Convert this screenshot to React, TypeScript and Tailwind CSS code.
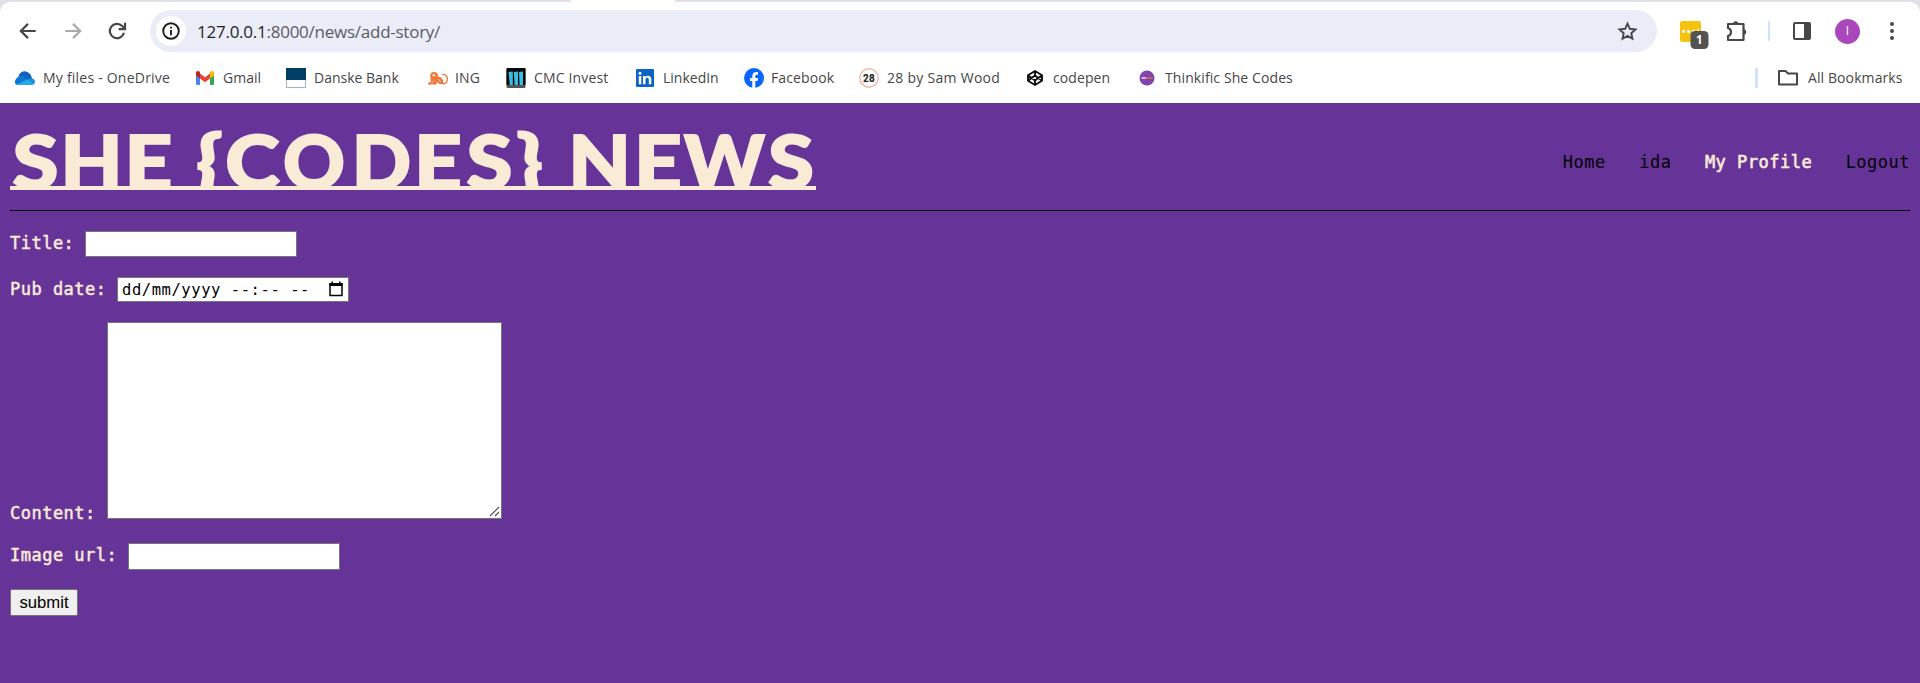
import type { ReactNode } from "react";

const ui = "font-['Open_Sans','Noto_Sans',sans-serif]";
const mono = "font-['DejaVu_Sans_Mono',monospace] text-[17px] leading-6 tracking-[0.49px]";

function Icon({ size = 20, box = "0 0 20 20", children }: { size?: number; box?: string; children: ReactNode }) {
  return (
    <svg width={size} height={size} viewBox={box} fill="none" className="block shrink-0">
      {children}
    </svg>
  );
}

function Toolbar() {
  return (
    <div className="flex h-[58px] items-center">
      <div className="ml-[17px] flex">
        <Icon size={22}>
          <path d="M17 10H4M10 3.5L3.5 10L10 16.500" stroke="#474747" strokeWidth="2" />
        </Icon>
      </div>
      <div className="ml-[23px]">
        <Icon size={22}>
          <path d="M3 10H16M10 3.500L16.500 10L10 16.500" stroke="#a9a9a9" strokeWidth="2" />
        </Icon>
      </div>
      <div className="ml-[22px]">
        <Icon size={22}>
          <path d="M16.300 11.500A6.500 6.500 0 1 1 14.700 5.500L16.600 7.400" stroke="#474747" strokeWidth="2" />
          <path d="M17.300 2.500V8.300H11.500" stroke="#474747" strokeWidth="2" />
        </Icon>
      </div>
      <div className="ml-[22px] flex h-[42px] w-[1507px] items-center rounded-full bg-[#eaedf8]">
        <div className="ml-[6px] flex size-[30px] items-center justify-center rounded-full bg-white">
          <Icon size={18} box="0 0 18 18">
            <circle cx="9" cy="9" r="7.800" stroke="#1f1f1f" strokeWidth="1.900" />
            <path d="M9 8V13.300M9 4.700V6.600" stroke="#1f1f1f" strokeWidth="1.900" />
          </Icon>
        </div>
        <div className={`${ui} mt-px ml-[11px] w-[245px] whitespace-nowrap text-[17px] tracking-[-0.25px] text-[#5a5b60]`}>
          <span className="text-[#1f1f1f]">127.0.0.1</span>:8000/news/add-story/
        </div>
        <div className="mr-[19px] ml-auto">
          <Icon size={21}>
            <path d="M10 2.500L12.200 7.400L17.600 8L13.600 11.600L14.700 16.900L10 14.200L5.300 16.900L6.400 11.600L2.400 8L7.800 7.400Z" stroke="#474747" strokeWidth="1.800" />
          </Icon>
        </div>
      </div>
      <div className="mt-[8px] ml-[23px]">
        <svg width="30" height="30" viewBox="0 0 30 30" className="block">
          <rect x="0" y="1" width="21" height="21" rx="2.500" fill="#f3c30f" />
          <circle cx="3.600" cy="11.400" r="1.600" fill="#fff" />
          <circle cx="8.600" cy="11.400" r="1.600" fill="#fff" />
          <circle cx="13.600" cy="11.400" r="1.600" fill="#fff" />
          <rect x="17.500" y="8.500" width="1.200" height="4" fill="#fff" />
          <rect x="10.500" y="11" width="18" height="18" rx="4.500" fill="#535353" />
          <text x="19.300" y="24.200" fill="#fff" fontSize="11.500" fontWeight="700" textAnchor="middle" fontFamily="Open Sans, sans-serif">1</text>
        </svg>
      </div>
      <div className="ml-[15px]">
        <Icon size={23} box="0 0 23 23">
          <path d="M3 4H18.500V20H3V16C5 15.500 6 14 6 12S5 8.500 3 8Z" stroke="#474747" strokeWidth="2.200" strokeLinejoin="round" />
          <path d="M8 4A2.700 2.700 0 0 1 13.400 4ZM18.500 9.300A2.700 2.700 0 0 1 18.500 14.700Z" fill="#474747" />
        </Icon>
      </div>
      <div className="ml-[20px] h-5 w-[2px] bg-[#d0e1fb]" />
      <div className="ml-[23px]">
        <Icon size={18} box="0 0 18 18">
          <rect x="1" y="1" width="16" height="16" rx="1" stroke="#474747" strokeWidth="2" />
          <path d="M11 1H17V17H11Z" fill="#474747" />
        </Icon>
      </div>
      <div className={`${ui} ml-[24px] flex size-[25px] items-center justify-center rounded-full bg-[#ab47bc] text-[12px] text-white`}>I</div>
      <div className="ml-[30px] flex flex-col gap-[3px]">
        <i className="block size-1 rounded-full bg-[#474747]" />
        <i className="block size-1 rounded-full bg-[#474747]" />
        <i className="block size-1 rounded-full bg-[#474747]" />
      </div>
    </div>
  );
}

const bookmarks: { label: string; slot: string; gap: string; icon: ReactNode }[] = [
  {
    label: "My files - OneDrive", slot: "w-[181px] tracking-[0.22px]", gap: "w-[28px]",
    icon: (
      <Icon>
        <path d="M5 11C1.500 11 0 13 0 14.200 0 16 1.500 17 3.500 17H16.500C18.500 17 20 15.600 20 13.800 20 12 18.700 10.700 17 10.500 16 5.500 12.500 3.500 9.500 3.500 6.500 3.500 4 5.500 3.500 8.500Z" fill="#1490df" />
        <path d="M3.500 8.500C4.500 5 7 3.500 9.500 3.500 12.500 3.500 16 5.500 16.500 10.300L12 11.500 7 8.500Z" fill="#0f62bd" />
        <path d="M0 14C0 10.500 4 7 8 9.200L12 11.500 2 16.500C.8 16 0 15.200 0 14Z" fill="#0a78d4" />
        <path d="M2 16.500L12 11.500 18.500 15.800C18 16.700 17.300 17 16.500 17H3.500Z" fill="#28a8ea" />
      </Icon>
    ),
  },
  {
    label: "Gmail", slot: "w-[90px] tracking-[0px]", gap: "w-[27px]",
    icon: (
      <Icon size={18} box="0 0 18 18">
        <path d="M0 4V14.800C0 15.500.5 16 1.200 16H4V8Z" fill="#4285f4" />
        <path d="M14 8V16H16.800C17.500 16 18 15.500 18 14.800V4Z" fill="#34a853" />
        <path d="M4 4.500V9.500L9 13.200L14 9.500V4.500L9 8.300Z" fill="#ea4335" />
        <path d="M0 4C0 2 2 1.300 3.500 2.500L4 3V9.500L0 6.500Z" fill="#c5221f" />
        <path d="M18 4C18 2 16 1.300 14.500 2.500L14 3V9.500L18 6.500Z" fill="#fbbc04" />
      </Icon>
    ),
  },
  {
    label: "Danske Bank", slot: "w-[142px]", gap: "w-[28px]",
    icon: (
      <Icon>
        <rect x=".5" y=".5" width="19" height="19" fill="#fff" stroke="#a3b4c3" />
        <rect width="20" height="12" fill="#003e66" />
      </Icon>
    ),
  },
  {
    label: "ING", slot: "w-[78px] tracking-[0.2px]", gap: "w-[27px]",
    icon: (
      <Icon>
        <path d="M2.500 10C1.500 6 3.500 4 6 4 9 4 10.300 6 9.800 8.500L13 9.500 15 12 15.500 16H11.500L9.500 14 8 16.500H0V15L3 13.500Z" fill="#f4773a" />
        <circle cx="5.800" cy="7.300" r="1.400" fill="#ffd9c2" />
        <path d="M15 16C20 15.500 20.500 9 17.500 7.300 16.500 6.500 15 6.300 14 6.700" stroke="#f4773a" strokeWidth="1.300" />
        <path d="M3.500 15L6 12.500M10.500 11L12.500 14" stroke="#fff" strokeWidth=".7" />
      </Icon>
    ),
  },
  {
    label: "CMC Invest", slot: "w-[130px] tracking-[0.15px]", gap: "w-[28px]",
    icon: (
      <Icon>
        <rect x=".5" width="19" height="20" rx="1" fill="#555" />
        <rect x=".5" width="19" height="17" rx="1" fill="#090909" />
        <path d="M2.500 4L6.800 3.500V17H3.800ZM7.800 4L12 3.500V17H8.600ZM13 4L17 3.500V17H13.500Z" fill="#35bfe3" />
      </Icon>
    ),
  },
  {
    label: "LinkedIn", slot: "w-[108px] tracking-[0px]", gap: "w-[27px]",
    icon: (
      <Icon size={18} box="0 0 18 18">
        <rect width="18" height="18" rx="1" fill="#0a66c2" />
        <path d="M2.800 7H5.300V15.200H2.800ZM7 7H9.400V8.100C10.700 6.100 15.300 6.200 15.300 10.200V15.200H12.800V10.700C12.800 8.100 9.500 8.300 9.500 10.700V15.200H7Z" fill="#fff" />
        <circle cx="4" cy="4.200" r="1.500" fill="#fff" />
      </Icon>
    ),
  },
  {
    label: "Facebook", slot: "w-[115px] tracking-[0.1px]", gap: "w-[27px]",
    icon: (
      <Icon>
        <circle cx="10" cy="10" r="10" fill="#0866ff" />
        <path d="M8.300 20V13H6V10H8.300V8.500C8.300 5.300 9.800 3.900 12.500 3.900L14 4V6.700H12.800C11.600 6.700 11.300 7.200 11.300 8.500V10H14L13.500 13H11.300V20Z" fill="#fff" />
      </Icon>
    ),
  },
  {
    label: "28 by Sam Wood", slot: "w-[167px] tracking-[0.28px]", gap: "w-[28px]",
    icon: (
      <Icon>
        <circle cx="10" cy="10" r="9.200" stroke="#f3b8ac" strokeWidth="1.500" fill="#fff" />
        <text x="10" y="14" fontSize="11.500" fontWeight="800" textAnchor="middle" textLength="12" lengthAdjust="spacingAndGlyphs" fill="#222" fontFamily="Roboto, sans-serif">28</text>
      </Icon>
    ),
  },
  {
    label: "codepen", slot: "w-[113px] tracking-[0.1px]", gap: "w-[27px]",
    icon: (
      <Icon size={18} box="0 0 18 18">
        <path d="M9 2L16 6.200V11.800L9 16L2 11.800V6.200ZM9 2V6.500M9 11.500V16M2 6.200L9 11.500L16 6.200M2 11.800L9 6.500L16 11.800" stroke="#111" strokeWidth="1.900" strokeLinejoin="round" />
      </Icon>
    ),
  },
  {
    label: "Thinkific She Codes", slot: "w-[180px] tracking-[0.1px]", gap: "w-[26px]",
    icon: (
      <Icon size={16} box="0 0 16 16">
        <circle cx="8" cy="8" r="7.500" fill="#8343ae" />
        <path d="M2.500 8H7" stroke="#d8c4ea" strokeWidth="1.800" />
        <path d="M7 8H13.500" stroke="#b9714e" strokeWidth="1.800" />
      </Icon>
    ),
  },
];

function BookmarkBar() {
  return (
    <div className={`${ui} flex h-[35px] items-center pl-[15px] text-[14px] text-[#474747]`}>
      {bookmarks.map((b) => (
        <div key={b.label} className={`flex shrink-0 items-center whitespace-nowrap ${b.slot}`}>
          <div className={`shrink-0 ${b.gap}`}>{b.icon}</div>
          {b.label}
        </div>
      ))}
      <div className="ml-auto h-5 w-[3px] bg-[#d0e1fb]" />
      <div className="ml-[19px]">
        <svg width="22" height="18" viewBox="0 0 22 18" fill="none" className="block">
          <path d="M2 3V15.500H20V4.500H11L8.500 2H2Z" stroke="#474747" strokeWidth="2" strokeLinejoin="round" />
        </svg>
      </div>
      <div className="ml-[9px] w-[112px] whitespace-nowrap tracking-[0.1px]">All Bookmarks</div>
    </div>
  );
}

const heading: [string, string][] = [
  ["S", "w-[45px] mr-[9px] scale-x-[1.11]"],
  ["H", "w-[49px] mr-[12px] scale-x-[1.07]"],
  ["E", "w-[41px] mr-[29px] scale-x-[1.11]"],
  ["{", "w-[23px] mr-[5px] scale-x-[1.15]"],
  ["C", "w-[53px] mr-[5px] scale-x-[1.1]"],
  ["O", "w-[60px] mr-[12px] scale-x-[1.02]"],
  ["D", "w-[51px] mr-[11px] scale-x-[1.04]"],
  ["E", "w-[40px] mr-[9px] scale-x-[1.11]"],
  ["S", "w-[45px] mr-[6px] scale-x-[1.11]"],
  ["}", "w-[23px] mr-[32px] scale-x-[1.15]"],
  ["N", "w-[53px] mr-[12px] scale-x-[1.08]"],
  ["E", "w-[40px] mr-[5px] scale-x-[1.11]"],
  ["W", "w-[83px] mr-[2px] scale-x-[1.02]"],
  ["S", "w-[46px] scale-x-[1.11]"],
];

function SiteHeader() {
  return (
    <header className="flex h-[108px] justify-between border-b border-black">
      <h1 className="mt-[17px] flex h-[70px] w-[806px] items-start border-b-[4px] border-[#faebd7] pl-[3px] font-['Lato',sans-serif] text-[75px] leading-[94px] font-black text-[#faebd7] [-webkit-text-stroke:2px_#faebd7] [clip-path:inset(0)]">
        {heading.map(([letter, width], i) => (
          <span key={i} className={`-mt-[7px] flex shrink-0 justify-center ${width}`}>{letter}</span>
        ))}
      </h1>
      <nav className={`${mono} mt-[47px] flex gap-[33.500px] text-black`}>
        <a>Home</a>
        <a>ida</a>
        <a className="text-[#faebd7] [-webkit-text-stroke:0.6px_#faebd7]">My Profile</a>
        <a>Logout</a>
      </nav>
    </header>
  );
}

function StoryForm() {
  return (
    <form className={`${mono} text-[#faebd7] [-webkit-text-stroke:0.500px_#faebd7]`}>
      <div className="mt-[20px] flex h-[26px]">
        <label className="w-[75px]">Title:</label>
        <input className="h-[26px] w-[212px] rounded-[1px] border border-[#767676] bg-white" />
      </div>
      <div className="mt-[20px] flex h-[25px]">
        <label className="w-[107px]">Pub date:</label>
        <div className="flex h-[25px] w-[232px] items-center rounded-[1px] border border-[#767676] bg-white pl-1 text-[15.500px] tracking-[0.56px] whitespace-pre text-black [-webkit-text-stroke:0px]">
          dd/mm/yyyy --:-- --
          <svg width="14" height="16" viewBox="0 0 14 16" fill="none" className="mr-[5px] mb-[2px] ml-auto block">
            <path d="M1 3H13V14.500H1Z" stroke="#000" strokeWidth="1.500" />
            <path d="M.5 2H13.500V5H.5ZM2.500 .5H4V3H2.500ZM10 .5H11.500V3H10Z" fill="#000" />
          </svg>
        </div>
      </div>
      <div className="mt-[20px] flex h-[197px] items-end">
        <label className="mb-[-6px] w-[97px]">Content:</label>
        <div className="flex h-[197px] w-[395px] items-end justify-end border border-[#767676] bg-white p-px">
          <svg width="11" height="11" viewBox="0 0 11 11" className="block" stroke="#555" strokeWidth="1.200">
            <path d="M1 10L10 1M6 10L10 6" />
          </svg>
        </div>
      </div>
      <div className="mt-[24px] flex h-[27px]">
        <label className="w-[118px]">Image url:</label>
        <input className="h-[27px] w-[212px] border border-[#767676] bg-white" />
      </div>
      <button className="mt-[19px] block h-[27px] w-[68px] rounded-[2px] border border-[#767676] bg-[#efefef] font-['Liberation_Sans',sans-serif] text-[16.700px] leading-[22px] tracking-normal text-black [-webkit-text-stroke:0px]">
        submit
      </button>
    </form>
  );
}

export default function App() {
  return (
    <div className="flex h-[683px] w-[1920px] flex-col overflow-hidden bg-[#dee1e6]">
      <div className="flex h-[2px] shrink-0 pl-[571px]"><div className="h-[2px] w-[104px] bg-white" /></div>
      <div className="h-[101px] shrink-0 rounded-t-[10px] bg-white">
        <Toolbar />
        <BookmarkBar />
      </div>
      <main className="flex-1 bg-[#663399] px-[10px]">
        <SiteHeader />
        <StoryForm />
      </main>
    </div>
  );
}
